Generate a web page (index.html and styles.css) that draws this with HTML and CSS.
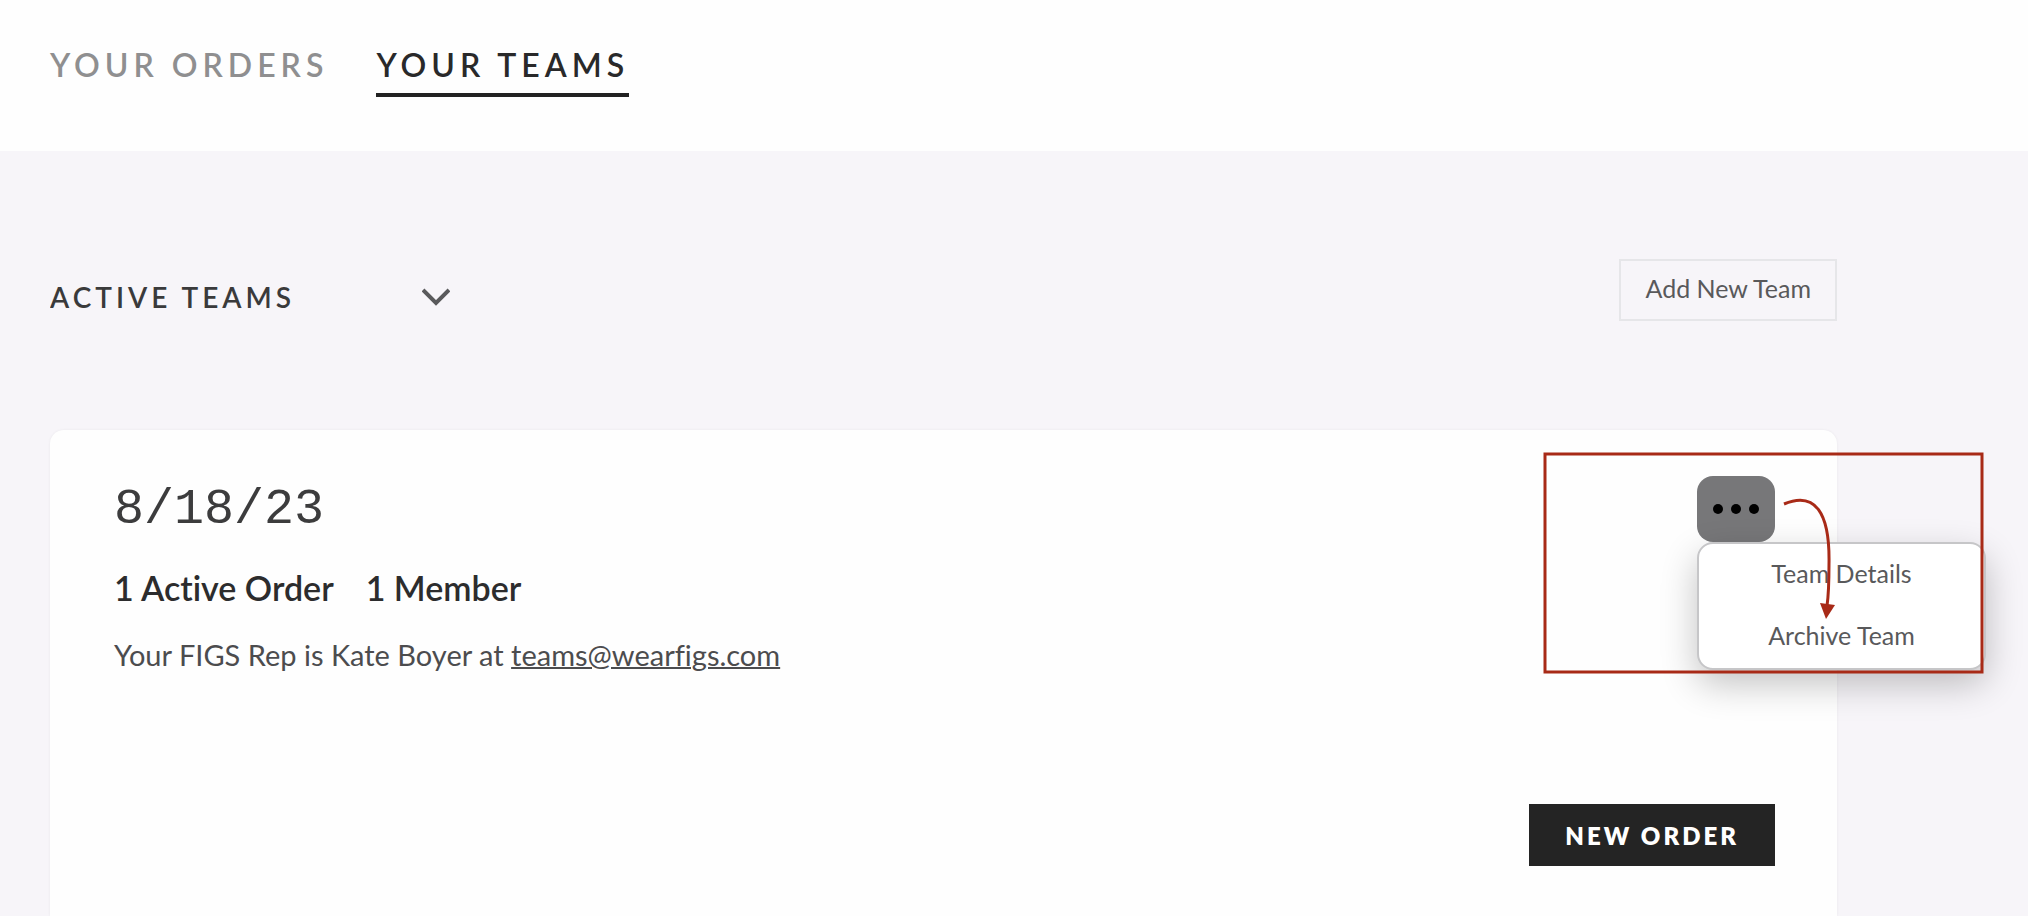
FILE: index.html
```html
<!DOCTYPE html>
<html lang="en">
<head>
    <meta charset="UTF-8">
    <meta name="viewport" content="width=device-width, initial-scale=1.0">
    <title>Your Teams</title>
    <link rel="stylesheet" href="styles.css">
</head>
<body>
    <!-- Tabs -->
    <header class="header">
        <nav class="tabs">
            <a href="#" class="tab">YOUR ORDERS</a>
            <a href="#" class="tab active">YOUR TEAMS</a>
        </nav>
    </header>

    <main class="content">
        <div class="toolbar">
            <div class="team-filter">
                <select id="team-filter" aria-label="Filter teams">
                    <option>ACTIVE TEAMS</option>
                </select>
                <svg class="chevron" width="28" height="18" viewBox="0 0 28 18">
                    <path d="M1 2 L14 15 L27 2" fill="none" stroke="#5a5a5c" stroke-width="4"/>
                </svg>
            </div>
            <button type="button" class="add-btn">Add New Team</button>
        </div>

        <!-- Team Card -->
        <section class="team-card">
            <div class="team-top">
                <div class="team-info">
                    <h1>8/18/23</h1>
                    <div class="team-stats">
                        <span>1 Active Order</span>
                        <span>1 Member</span>
                    </div>
                    <p class="team-rep">Your FIGS Rep is Kate Boyer at <a href="#">teams@wearfigs.com</a></p>
                </div>
                <div class="team-actions">
                    <button type="button" class="more-btn" aria-label="More">
                        <svg width="48" height="12" viewBox="0 0 48 12">
                            <circle cx="6" cy="6" r="5"/>
                            <circle cx="24" cy="6" r="5"/>
                            <circle cx="42" cy="6" r="5"/>
                        </svg>
                    </button>
                    <div class="menu">
                        <button type="button">Team Details</button>
                        <button type="button">Archive Team</button>
                    </div>
                    <!-- Callout -->
                    <svg class="callout" width="442" height="224" viewBox="0 0 442 224">
                        <rect x="2" y="2" width="437" height="218" fill="none" stroke="#a82a17" stroke-width="3"/>
                        <path d="M241 52 C272 39 287 60 286 112 C286 128 286 140 284 154" fill="none" stroke="#a82a17" stroke-width="3"/>
                        <path d="M277 151 L292 153 L283 167 Z" fill="#a82a17"/>
                    </svg>
                </div>
            </div>
            <div class="team-footer">
                <button type="button" class="order-btn">NEW ORDER</button>
            </div>
        </section>
    </main>
</body>
</html>
```
FILE: styles.css
```css
* {
    margin: 0;
    padding: 0;
    box-sizing: border-box;
}
body {
    font-family: Lato, sans-serif;
    font-variant-ligatures: none;
    background: #f7f5f9;
    color: #2c2c2d;
    min-height: 100vh;
    display: flex;
    flex-direction: column;
}
button, select {
    font-family: inherit;
    color: inherit;
    cursor: pointer;
}
.header {
    background: #fefefe;
    padding: 45px 50px 54px;
}
.tabs {
    display: flex;
    gap: 48px;
}
.tab {
    color: #8f8f90;
    font-size: 32px;
    line-height: 40px;
    font-weight: 600;
    letter-spacing: 5px;
    text-decoration: none;
    padding-bottom: 8px;
    border-bottom: 4px solid transparent;
}
.tab.active {
    color: #29292a;
    border-bottom-color: #222;
}
.content {
    flex: 1;
    display: flex;
    flex-direction: column;
    padding: 108px 191px 0 50px;
}
.toolbar {
    display: flex;
    justify-content: space-between;
    align-items: flex-start;
    margin-bottom: 109px;
}
.team-filter {
    position: relative;
    width: 400px;
    padding-top: 16px;
}
.team-filter select {
    appearance: none;
    width: 100%;
    height: 44px;
    border: none;
    background: transparent;
    color: #3a3a3b;
    font-size: 28px;
    font-weight: 600;
    letter-spacing: 4px;
}
.chevron {
    position: absolute;
    right: 0;
    top: 29px;
    pointer-events: none;
}
.add-btn {
    height: 62px;
    padding: 0 24px 4px;
    border: 2px solid #e6e6e9;
    background: transparent;
    color: #59595b;
    font-size: 25px;
}
.team-card {
    flex: 1;
    background: #fefefe;
    border-radius: 14px 14px 0 0;
    box-shadow: 0 0 3px rgba(0,0,0,0.06);
    padding: 46px 62px 0 64px;
}
.team-top {
    display: flex;
    justify-content: space-between;
    align-items: flex-start;
}
.team-info h1 {
    font-family: "Liberation Mono", monospace;
    font-size: 50px;
    line-height: 60px;
    font-weight: 400;
    color: #3c3c3d;
    padding-top: 4px;
}
.team-stats {
    display: flex;
    gap: 32px;
    margin-top: 28px;
    font-size: 34px;
    line-height: 40px;
    font-weight: 600;
}
.team-rep {
    margin-top: 29px;
    font-size: 29px;
    line-height: 36px;
    color: #4c4c4e;
}
.team-rep a {
    color: inherit;
    text-decoration-thickness: 2px;
}
.team-actions {
    position: relative;
}
.more-btn {
    display: flex;
    align-items: center;
    justify-content: center;
    width: 78px;
    height: 66px;
    border: none;
    border-radius: 16px;
    background: #777779;
}
.menu {
    position: absolute;
    top: 66px;
    left: 0;
    width: 289px;
    border: 2px solid #c6c6c8;
    border-radius: 16px;
    background: #fff;
    box-shadow: 0 14px 36px rgba(0,0,0,0.24);
}
.menu button {
    display: block;
    width: 100%;
    height: 62px;
    padding-bottom: 4px;
    border: none;
    background: transparent;
    color: #59595b;
    font-size: 25px;
}
.callout {
    position: absolute;
    top: -24px;
    left: -154px;
    pointer-events: none;
}
.team-footer {
    display: flex;
    justify-content: flex-end;
    margin-top: 131px;
}
.order-btn {
    height: 62px;
    padding: 0 36px;
    border: none;
    background: #242424;
    color: #fff;
    font-size: 24px;
    font-weight: 800;
    letter-spacing: 3px;
}
```
